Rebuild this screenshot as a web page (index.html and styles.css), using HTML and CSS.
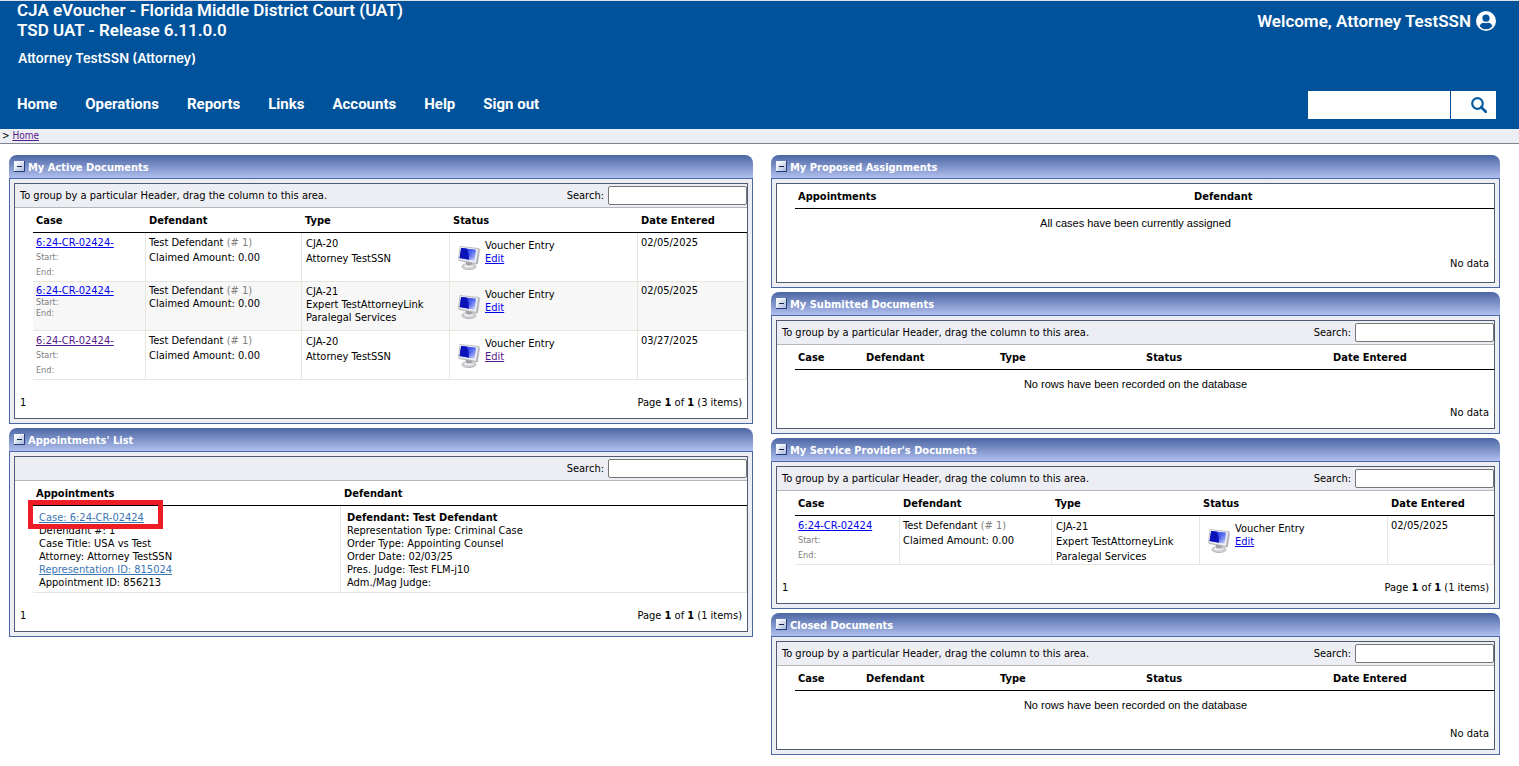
FILE: index.html
```html
<!DOCTYPE html>
<html lang="en">
<head>
<meta charset="utf-8">
<title>CJA eVoucher</title>
<link rel="stylesheet" href="styles.css">
</head>
<body>
<svg class="defs" aria-hidden="true">
  <defs>
    <linearGradient id="screen" x1="0" y1="0" x2="1" y2="1">
      <stop offset="0" stop-color="#0a18d8"/><stop offset=".45" stop-color="#1f35e6"/><stop offset="1" stop-color="#e4eaff"/>
    </linearGradient>
    <linearGradient id="case" x1="0" y1="0" x2="1" y2="1">
      <stop offset="0" stop-color="#d9dade"/><stop offset="1" stop-color="#a9abb2"/>
    </linearGradient>
    <linearGradient id="button" x1="0" y1="0" x2="1" y2="1">
      <stop offset="0" stop-color="#ffffff"/><stop offset="1" stop-color="#a9b9dc"/>
    </linearGradient>
    <symbol id="monitor" viewBox="0 0 22 24">
      <ellipse cx="11" cy="20.500" rx="7" ry="3" fill="#d4d5d6" stroke="#a3a4a6" stroke-width=".8"/>
      <ellipse cx="10.500" cy="19.500" rx="4" ry="1.500" fill="#f6f6f6"/>
      <path d="M7.500 15.500L14 17l-.5 2.500h-5z" fill="#9fa1a6"/>
      <path d="M2 .5L21 2.500l.5 2L19.500 18 1 14.500.5 13z" fill="url(#case)" stroke="#a8aab0" stroke-width=".6"/>
      <path d="M2.500 1L20 3l-2 14L1 13.500z" fill="#eceef2"/>
      <path d="M3.200 2L18 3.800l-1.500 11L1.600 12z" fill="url(#screen)"/>
      <path d="M3.200 2L9 2.700 10.500 8l.5 5.800L1.600 12z" fill="#0a12b8"/>
      <path d="M9 2.700L18 3.800l-.9 7L10.500 7z" fill="#8fa4f8" opacity=".3"/>
    </symbol>
    <symbol id="minus" viewBox="0 0 11 11">
      <path d="M0 0h11v11H0z" fill="#27407c"/>
      <path d="M0 0h10v10H0z" fill="#f4f7fd"/>
      <path d="M1 1h9v9H1z" fill="url(#button)"/>
      <path d="M3 5h5v1H3z" fill="#16244a"/>
    </symbol>
  </defs>
</svg>

<header class="banner">
  <div class="banner-top">
    <div>
      <h1 class="app-title">CJA eVoucher - Florida Middle District Court (UAT)<br>TSD UAT - Release 6.11.0.0</h1>
      <p class="role">Attorney TestSSN (Attorney)</p>
    </div>
    <div class="welcome">
      <span>Welcome, Attorney TestSSN</span>
      <svg class="user-icon" viewBox="0 0 20 20" aria-hidden="true">
        <circle cx="10" cy="10" r="10" fill="#fff"/>
        <circle cx="10" cy="7.200" r="3.600" fill="#00529b"/>
        <path d="M3.600 15.200c.6-2.300 2.600-3.400 4.400-3.400.7.300 1.300.4 2 .4s1.300-.1 2-.4c1.800 0 3.800 1.100 4.400 3.400a8.300 8.300 0 0 1-12.800 0z" fill="#00529b"/>
      </svg>
    </div>
  </div>
  <div class="banner-bottom">
    <nav class="menu">
      <a href="#">Home</a><a href="#">Operations</a><a href="#">Reports</a><a href="#">Links</a><a href="#">Accounts</a><a href="#">Help</a><a href="#">Sign out</a>
    </nav>
    <form class="site-search">
      <input type="text" aria-label="Search site">
      <button type="button" aria-label="Search">
        <svg viewBox="0 0 16 16" aria-hidden="true"><circle cx="6.500" cy="6.500" r="5.300" fill="none" stroke="#0a5c9e" stroke-width="2.200"/><path d="M10.300 10.300l4.500 4.500" stroke="#0a5c9e" stroke-width="2.800" stroke-linecap="round"/></svg>
      </button>
    </form>
  </div>
</header>
<div class="crumbs">&gt; <a class="visited" href="#">Home</a></div>

<main class="columns">
  <div class="column">
    <section class="panel">
      <h2 class="panel-title"><button class="toggle" type="button" aria-label="Collapse My Active Documents"><svg viewBox="0 0 11 11"><use href="#minus"/></svg></button>My Active Documents</h2>
      <div class="panel-frame"><div class="panel-body">
        <div class="group-bar"><span>To group by a particular Header, drag the column to this area.</span><label class="find">Search: <input type="text"></label></div>
        <table class="grid">
          <colgroup><col class="w113"><col class="w156"><col class="w148"><col><col class="w109"></colgroup>
          <thead><tr><th>Case</th><th>Defendant</th><th>Type</th><th>Status</th><th>Date Entered</th></tr></thead>
          <tbody>
            <tr>
              <td><a href="#">6:24-CR-02424-</a><small>Start:</small><small>End:</small></td>
              <td>Test Defendant <span class="dim">(# 1)</span><br>Claimed Amount: 0.00</td>
              <td class="type">CJA-20<br>Attorney TestSSN</td>
              <td><div class="status"><svg class="monitor" aria-hidden="true"><use href="#monitor"/></svg><div>Voucher Entry<br><a href="#">Edit</a></div></div></td>
              <td>02/05/2025</td>
            </tr>
            <tr class="alt tight">
              <td><a href="#">6:24-CR-02424-</a><small>Start:</small><small>End:</small></td>
              <td>Test Defendant <span class="dim">(# 1)</span><br>Claimed Amount: 0.00</td>
              <td class="type">CJA-21<br>Expert TestAttorneyLink<br>Paralegal Services</td>
              <td><div class="status"><svg class="monitor" aria-hidden="true"><use href="#monitor"/></svg><div>Voucher Entry<br><a href="#">Edit</a></div></div></td>
              <td>02/05/2025</td>
            </tr>
            <tr>
              <td><a class="visited" href="#">6:24-CR-02424-</a><small>Start:</small><small>End:</small></td>
              <td>Test Defendant <span class="dim">(# 1)</span><br>Claimed Amount: 0.00</td>
              <td class="type">CJA-20<br>Attorney TestSSN</td>
              <td><div class="status"><svg class="monitor" aria-hidden="true"><use href="#monitor"/></svg><div>Voucher Entry<br><a class="visited" href="#">Edit</a></div></div></td>
              <td>03/27/2025</td>
            </tr>
          </tbody>
        </table>
        <div class="pager"><span>1</span><span>Page <b>1</b> of <b>1</b> (3 items)</span></div>
      </div></div>
    </section>

    <section class="panel">
      <h2 class="panel-title"><button class="toggle" type="button" aria-label="Collapse Appointments' List"><svg viewBox="0 0 11 11"><use href="#minus"/></svg></button>Appointments' List</h2>
      <div class="panel-frame"><div class="panel-body">
        <div class="group-bar"><span></span><label class="find">Search: <input type="text"></label></div>
        <table class="grid">
          <colgroup><col class="w308"><col></colgroup>
          <thead><tr><th>Appointments</th><th>Defendant</th></tr></thead>
          <tbody>
            <tr class="details">
              <td><div class="marked"><a class="soft" href="#">Case: 6:24-CR-02424</a></div>Defendant #: 1<br>Case Title: USA vs Test<br>Attorney: Attorney TestSSN<br><a class="soft" href="#">Representation ID: 815024</a><br>Appointment ID: 856213</td>
              <td><b>Defendant: Test Defendant</b><br>Representation Type: Criminal Case<br>Order Type: Appointing Counsel<br>Order Date: 02/03/25<br>Pres. Judge: Test FLM-j10<br>Adm./Mag Judge:</td>
            </tr>
          </tbody>
        </table>
        <div class="pager"><span>1</span><span>Page <b>1</b> of <b>1</b> (1 items)</span></div>
      </div></div>
    </section>
  </div>

  <div class="column">
    <section class="panel">
      <h2 class="panel-title"><button class="toggle" type="button" aria-label="Collapse My Proposed Assignments"><svg viewBox="0 0 11 11"><use href="#minus"/></svg></button>My Proposed Assignments</h2>
      <div class="panel-frame"><div class="panel-body">
        <table class="grid">
          <colgroup><col class="w396"><col></colgroup>
          <thead><tr><th>Appointments</th><th>Defendant</th></tr></thead>
          <tbody><tr class="empty tall"><td colspan="2">All cases have been currently assigned</td></tr></tbody>
        </table>
        <div class="pager tall"><span></span><span>No data</span></div>
      </div></div>
    </section>

    <section class="panel">
      <h2 class="panel-title"><button class="toggle" type="button" aria-label="Collapse My Submitted Documents"><svg viewBox="0 0 11 11"><use href="#minus"/></svg></button>My Submitted Documents</h2>
      <div class="panel-frame"><div class="panel-body">
        <div class="group-bar"><span>To group by a particular Header, drag the column to this area.</span><label class="find">Search: <input type="text"></label></div>
        <table class="grid">
          <colgroup><col class="w68"><col class="w134"><col class="w146"><col><col class="w164"></colgroup>
          <thead><tr><th>Case</th><th>Defendant</th><th>Type</th><th>Status</th><th>Date Entered</th></tr></thead>
          <tbody><tr class="empty"><td colspan="5">No rows have been recorded on the database</td></tr></tbody>
        </table>
        <div class="pager"><span></span><span>No data</span></div>
      </div></div>
    </section>

    <section class="panel">
      <h2 class="panel-title"><button class="toggle" type="button" aria-label="Collapse My Service Provider's Documents"><svg viewBox="0 0 11 11"><use href="#minus"/></svg></button>My Service Provider's Documents</h2>
      <div class="panel-frame"><div class="panel-body">
        <div class="group-bar"><span>To group by a particular Header, drag the column to this area.</span><label class="find">Search: <input type="text"></label></div>
        <table class="grid">
          <colgroup><col class="w105"><col class="w152"><col class="w148"><col><col class="w106"></colgroup>
          <thead><tr><th>Case</th><th>Defendant</th><th>Type</th><th>Status</th><th>Date Entered</th></tr></thead>
          <tbody>
            <tr>
              <td><a href="#">6:24-CR-02424</a><small>Start:</small><small>End:</small></td>
              <td>Test Defendant <span class="dim">(# 1)</span><br>Claimed Amount: 0.00</td>
              <td class="type">CJA-21<br>Expert TestAttorneyLink<br>Paralegal Services</td>
              <td><div class="status"><svg class="monitor" aria-hidden="true"><use href="#monitor"/></svg><div>Voucher Entry<br><a href="#">Edit</a></div></div></td>
              <td>02/05/2025</td>
            </tr>
          </tbody>
        </table>
        <div class="pager"><span>1</span><span>Page <b>1</b> of <b>1</b> (1 items)</span></div>
      </div></div>
    </section>

    <section class="panel">
      <h2 class="panel-title"><button class="toggle" type="button" aria-label="Collapse Closed Documents"><svg viewBox="0 0 11 11"><use href="#minus"/></svg></button>Closed Documents</h2>
      <div class="panel-frame"><div class="panel-body">
        <div class="group-bar"><span>To group by a particular Header, drag the column to this area.</span><label class="find">Search: <input type="text"></label></div>
        <table class="grid">
          <colgroup><col class="w68"><col class="w134"><col class="w146"><col><col class="w164"></colgroup>
          <thead><tr><th>Case</th><th>Defendant</th><th>Type</th><th>Status</th><th>Date Entered</th></tr></thead>
          <tbody><tr class="empty"><td colspan="5">No rows have been recorded on the database</td></tr></tbody>
        </table>
        <div class="pager"><span></span><span>No data</span></div>
      </div></div>
    </section>
  </div>
</main>
</body>
</html>
```

FILE: styles.css
```css
*, *::after { box-sizing: border-box; }
body {
  margin: 0;
  background: #fff;
  color: #000;
  font: 11px/13px "DejaVu Sans Condensed", "DejaVu Sans", sans-serif;
}
h1, h2, p { margin: 0; }
a { color: #0000ee; }
a.visited { color: #551a8b; }
a.soft { color: #3a75b5; }
.defs { position: absolute; width: 0; height: 0; }

/* Banner */
.banner {
  padding: 0 23px 10px 17px;
  background: #00529b;
  box-shadow: inset 0 1px #dfe1ea;
  color: #fff;
  font-family: Roboto, sans-serif;
}
.banner-top { display: flex; justify-content: space-between; }
.app-title { font-size: 17px; line-height: 20px; font-weight: 600; }
.role { margin-top: 8px; padding-left: 1px; font: 600 13px/20px Inter, sans-serif; }
.welcome { display: flex; align-items: center; gap: 5px; height: 42px; font-size: 17px; line-height: 20px; font-weight: 600; }
.user-icon { width: 20px; height: 20px; }
.banner-bottom { display: flex; justify-content: space-between; align-items: center; margin-top: 23px; }
.menu { display: flex; gap: 28px; padding-bottom: 2px; }
.menu a { color: #fff; text-decoration: none; font-size: 15px; line-height: 20px; font-weight: 700; }
.site-search { display: flex; gap: 1px; }
.site-search input { width: 142px; height: 28px; border: 0; padding: 0 8px; background: #fff; }
.site-search button {
  display: flex; align-items: center; justify-content: flex-end;
  width: 45px; height: 28px; border: 0; padding: 0 9px 0 0; background: #fff;
}
.site-search svg { width: 16px; height: 16px; }

.crumbs {
  border-bottom: 1px solid #808491;
  padding: 0 2px 1px;
  background: #edeef4;
  font-size: 10px;
}

/* Dashboard */
.columns {
  display: grid;
  grid-template-columns: 744fr 729fr;
  gap: 18px;
  align-items: start;
  padding: 11px 19px 11px 9px;
}
.column { display: grid; gap: 4px; min-width: 0; }
.panel-title {
  display: flex; align-items: flex-start; gap: 3px;
  height: 23px;
  padding: 6px 5px 0;
  border-radius: 8px 8px 0 0;
  background: linear-gradient(#4c66a4, #b0bfee);
  color: #fff;
  font-size: 11px;
  line-height: 13px;
}
.toggle { display: block; border: 0; padding: 0; width: 11px; height: 11px; background: none; }
.toggle svg { display: block; width: 11px; height: 11px; }
.panel-frame { border: 1px solid #4a67a8; padding: 4px; background: #edeef4; }
.panel-body { border: 1px solid #505b70; background: #fff; }
.group-bar {
  display: flex; justify-content: space-between; align-items: center;
  height: 24px;
  border-bottom: 1px solid #b5b7bb;
  padding-left: 5px;
  background: #edeef4;
}
.find { display: flex; align-items: center; gap: 4px; }
.find input { width: 139px; height: 19px; border: 1px solid #767676; border-radius: 2px; padding: 0 2px; background: #fff; font: inherit; }

.grid { width: calc(100% - 18px); margin-left: 18px; border-collapse: separate; border-spacing: 0; table-layout: fixed; }
.w68 { width: 68px; } .w105 { width: 105px; } .w106 { width: 106px; } .w109 { width: 109px; }
.w113 { width: 113px; } .w134 { width: 134px; } .w146 { width: 146px; } .w148 { width: 148px; }
.w152 { width: 152px; } .w156 { width: 156px; } .w164 { width: 164px; } .w308 { width: 308px; } .w396 { width: 396px; }
.grid th { height: 25px; border-bottom: 1px solid #000; padding: 0 3px; text-align: left; font-weight: 700; }
.grid td {
  height: 49px;
  border: solid #e6e6df;
  border-width: 0 1px 1px 0;
  padding: 2px 3px 0;
  vertical-align: top;
  line-height: 15px;
}
.grid small { display: block; color: #808080; font-size: 9px; }
.grid .type { padding: 3px 4px 0; }
.dim { color: #808080; }
.alt td { background: #f7f7f7; }
.tight td { line-height: 13px; }
.tight small { line-height: 11px; }
.status { display: flex; gap: 5px; padding: 4px 5px 0; line-height: 13px; }
.monitor { width: 22px; height: 24px; margin-top: 7px; }
.details td { height: 87px; padding: 5px 6px 3px; line-height: 13px; }
.empty td { height: 20px; border: 0; padding: 8px 18px 0 0; text-align: center; font: 11px/12px "Liberation Sans", sans-serif; }
.empty.tall td { height: 32px; }
.pager { display: flex; justify-content: space-between; height: 38px; padding: 16px 5px 0; }
.pager.tall { height: 41px; }

/* Highlight frame drawn over the first appointment line */
.marked { position: relative; }
.marked::after {
  content: "";
  position: absolute;
  left: -11px; top: -11px;
  width: 135px; height: 29px;
  border: 5px solid #ee1c25;
}
```
